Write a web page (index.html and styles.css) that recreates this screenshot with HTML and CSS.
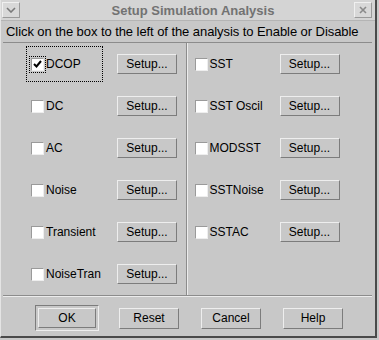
FILE: index.html
```html
<!DOCTYPE html>
<html lang="en">
<head>
    <meta charset="UTF-8">
    <title>Setup Simulation Analysis</title>
    <link rel="stylesheet" href="styles.css">
</head>
<body>
    <div class="window">
        <div class="titlebar">
            <span class="tb-btn">
                <svg width="10" height="6" viewBox="0 0 10 6"><path d="M1 1 L5 5 L9 1" fill="none" stroke="#7a7a7a" stroke-width="1.6"/></svg>
            </span>
            <span class="title">Setup Simulation Analysis</span>
            <span class="tb-btn close">
                <svg width="8" height="8" viewBox="0 0 8 8"><path d="M1 1 L7 7 M7 1 L1 7" stroke="#8a8a8a" stroke-width="1.6"/></svg>
            </span>
        </div>

        <div class="hint">Click on the box to the left of the analysis to Enable or Disable</div>

        <div class="frame">
            <!-- left column -->
            <div class="column left">
                <div class="row">
                    <label class="check focused"><span class="box checked"><svg width="9" height="8" viewBox="0 0 9 8"><path d="M1 4 L3.5 6.5 L8 1" fill="none" stroke="#000" stroke-width="2"/></svg></span>DCOP</label>
                    <button class="btn">Setup...</button>
                </div>
                <div class="row">
                    <label class="check"><span class="box"></span>DC</label>
                    <button class="btn">Setup...</button>
                </div>
                <div class="row">
                    <label class="check"><span class="box"></span>AC</label>
                    <button class="btn">Setup...</button>
                </div>
                <div class="row">
                    <label class="check"><span class="box"></span>Noise</label>
                    <button class="btn">Setup...</button>
                </div>
                <div class="row">
                    <label class="check"><span class="box"></span>Transient</label>
                    <button class="btn">Setup...</button>
                </div>
                <div class="row">
                    <label class="check"><span class="box"></span>NoiseTran</label>
                    <button class="btn">Setup...</button>
                </div>
            </div>

            <!-- right column -->
            <div class="column right">
                <div class="row">
                    <label class="check"><span class="box"></span>SST</label>
                    <button class="btn">Setup...</button>
                </div>
                <div class="row">
                    <label class="check"><span class="box"></span>SST Oscil</label>
                    <button class="btn">Setup...</button>
                </div>
                <div class="row">
                    <label class="check"><span class="box"></span>MODSST</label>
                    <button class="btn">Setup...</button>
                </div>
                <div class="row">
                    <label class="check"><span class="box"></span>SSTNoise</label>
                    <button class="btn">Setup...</button>
                </div>
                <div class="row">
                    <label class="check"><span class="box"></span>SSTAC</label>
                    <button class="btn">Setup...</button>
                </div>
            </div>
        </div>

        <div class="actions">
            <span class="default-frame"><button class="btn ok">OK</button></span>
            <button class="btn action">Reset</button>
            <button class="btn action">Cancel</button>
            <button class="btn action">Help</button>
        </div>
    </div>
</body>
</html>
```

FILE: styles.css
```css
body {
    margin: 0;
    background-color: #c8c8c8;
    font-family: "Liberation Sans", Arial, sans-serif;
    font-size: 12px;
    color: #000;
}

.window {
    width: 377px;
    height: 338px;
    box-sizing: border-box;
    background-color: #c8c8c8;
    border-left: 1px solid #e4e4e4;
    border-right: 2px solid #4a4a4a;
    border-bottom: 2px solid #4a4a4a;
}

.titlebar {
    height: 21px;
    box-sizing: border-box;
    display: flex;
    align-items: center;
    padding: 0 3px 0 1px;
    background-color: #d4d4d4;
    border-bottom: 1px solid #b4b4b4;
}

.tb-btn {
    width: 18px;
    height: 16px;
    box-sizing: border-box;
    display: flex;
    align-items: center;
    justify-content: center;
    border: 1px solid;
    border-color: #f0f0f0 #9a9a9a #9a9a9a #f0f0f0;
    background-color: #d8d8d8;
}

.title {
    flex: 1;
    text-align: center;
    padding-left: 12px;
    font-size: 13px;
    font-weight: bold;
    color: #727272;
}

.hint {
    height: 22px;
    box-sizing: border-box;
    margin: 0 3px 0 2px;
    padding-left: 3px;
    line-height: 21px;
    font-size: 13px;
    letter-spacing: -0.07px;
    border-bottom: 1px solid #8c8c8c;
}

.frame {
    display: flex;
    height: 252px;
    margin: 0 3px 0 2px;
    border-bottom: 1px solid #8c8c8c;
}

.column {
    width: 184px;
    box-sizing: border-box;
}

.column.left {
    padding-left: 23px;
    border-right: 1px solid #8c8c8c;
}

.column.right {
    width: 186px;
    padding-left: 2px;
    border-left: 1px solid #ececec;
}

.row {
    height: 42px;
    display: flex;
    align-items: center;
}

.column.left .row {
    gap: 14px;
}

.column.right .row {
    gap: 13px;
}

.check {
    width: 77px;
    height: 36px;
    box-sizing: border-box;
    display: flex;
    align-items: center;
    padding-left: 5px;
    white-space: nowrap;
}

.check.focused {
    outline: 1px dotted #000;
    outline-offset: -1px;
}

.box {
    width: 13px;
    height: 13px;
    box-sizing: border-box;
    margin-right: 2px;
    display: flex;
    align-items: center;
    justify-content: center;
    background-color: #fff;
    border: 1px solid;
    border-color: #9a9a9a #eeeeee #eeeeee #9a9a9a;
}

.box.checked {
    outline: 1px dotted #000;
    outline-offset: 1px;
}

.btn {
    width: 60px;
    height: 20px;
    padding: 0;
    box-sizing: border-box;
    font-family: inherit;
    font-size: 12px;
    color: #000;
    background-color: #c8c8c8;
    border: 1px solid;
    border-color: #eeeeee #7c7c7c #7c7c7c #eeeeee;
}

.actions {
    display: flex;
    align-items: center;
    padding: 8px 0 0 32px;
    margin: 0 3px 0 2px;
    border-top: 1px solid #ececec;
}

.default-frame {
    display: flex;
    padding: 2px;
    border: 1px solid;
    border-color: #7c7c7c #eeeeee #eeeeee #7c7c7c;
    margin-right: 20px;
}

.btn.ok {
    width: 58px;
}

.btn.action {
    height: 21px;
    margin-right: 22px;
}
```
